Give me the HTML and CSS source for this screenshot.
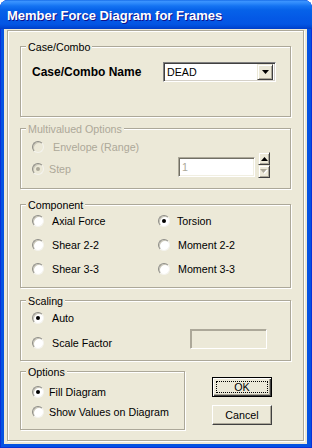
FILE: index.html
```html
<!DOCTYPE html>
<html>
<head>
<meta charset="utf-8">
<link rel="stylesheet" href="styles.css">
</head>
<body>
<div class="window">
  <div class="titlebar"><span class="title">Member Force Diagram for Frames</span></div>
  <div class="client">
    <div class="panel">
      <div class="group g-case">
        <div class="legend">Case/Combo</div>
        <div class="case-row">
          <span class="case-label">Case/Combo Name</span>
          <div class="combo">
            <span class="combo-text">DEAD</span>
            <span class="combo-btn"><svg width="7" height="4" viewBox="0 0 7 4"><path d="M0 0h7L3.5 4z" fill="#000"/></svg></span>
          </div>
        </div>
      </div>

      <div class="group g-multi disabled">
        <div class="legend">Multivalued Options</div>
        <div class="multi-body">
          <div class="radios gap6">
            <div class="opt wide"><span class="radio"></span><span>Envelope (Range)</span></div>
            <div class="opt narrow"><span class="radio checked"></span><span>Step</span></div>
          </div>
          <div class="stepper">
            <div class="textbox step-box">1</div>
            <div class="spin">
              <span class="spin-btn"><svg width="7" height="4" viewBox="0 0 7 4"><path d="M3.5 0L7 4H0z" fill="#000"/></svg></span>
              <span class="spin-btn"><svg width="8" height="5" viewBox="0 0 8 5"><path d="M1 1h7L4.5 5z" fill="#fff"/><path d="M0 0h7L3.5 4z" fill="#aca899"/></svg></span>
            </div>
          </div>
        </div>
      </div>

      <div class="group g-comp">
        <div class="legend">Component</div>
        <div class="comp-grid">
          <div class="opt"><span class="radio"></span><span>Axial Force</span></div>
          <div class="opt tight"><span class="radio checked"></span><span>Torsion</span></div>
          <div class="opt"><span class="radio"></span><span>Shear 2-2</span></div>
          <div class="opt"><span class="radio"></span><span>Moment 2-2</span></div>
          <div class="opt"><span class="radio"></span><span>Shear 3-3</span></div>
          <div class="opt"><span class="radio"></span><span>Moment 3-3</span></div>
        </div>
      </div>

      <div class="group g-scale">
        <div class="legend">Scaling</div>
        <div class="radios gap9 scale-body">
          <div class="opt"><span class="radio checked"></span><span>Auto</span></div>
          <div class="opt"><span class="radio"></span><span>Scale Factor</span><div class="textbox scale-box"></div></div>
        </div>
      </div>

      <div class="bottom">
        <div class="group g-options">
          <div class="legend">Options</div>
          <div class="radios gap4 options-body">
            <div class="opt narrow"><span class="radio checked"></span><span>Fill Diagram</span></div>
            <div class="opt narrow"><span class="radio"></span><span>Show Values on Diagram</span></div>
          </div>
        </div>
        <div class="buttons">
          <div class="btn default"><span class="focus">OK</span></div>
          <div class="btn">Cancel</div>
        </div>
      </div>
    </div>
  </div>
</div>
</body>
</html>
```
FILE: styles.css
```css
html, body {
  margin: 0;
  padding: 0;
  background: #fff;
}
.window {
  width: 312px;
  height: 448px;
  display: flex;
  flex-direction: column;
  background: #0553e2;
  border-radius: 8px 8px 0 0;
  box-shadow: inset 1px 0 0 #0831d9, inset -1px 0 0 #0831d9, inset 0 -1px 0 #0831d9;
  font-family: "Liberation Sans", Arial, sans-serif;
  font-size: 10.7px;
  color: #000;
}
.titlebar {
  height: 29px;
  flex: none;
  display: flex;
  align-items: center;
  padding-left: 7px;
  padding-top: 1px;
  box-sizing: border-box;
  border-radius: 8px 8px 0 0;
  background: linear-gradient(to bottom, #0a5fe0 0px, #3d95ff 1px, #2f8bfb 3px, #1473f2 6px, #0662e9 10px, #0459e6 18px, #0356e4 24px, #0049d6 27px, #003dc7 29px);
}
.title {
  color: #fff;
  font-weight: bold;
  font-size: 13px;
  text-shadow: 1px 1px 0 #0f1089;
}
.client {
  flex: 1;
  margin: 0 5px 4px 4px;
  background: #ece9d8;
  display: flex;
  flex-direction: column;
}
.panel {
  margin: 1px 3px 0 3px;
  height: 411px;
  box-sizing: border-box;
  border: 1px solid #aca899;
  box-shadow: inset 1px 1px 0 #fff, 1px 1px 0 #fff;
  padding: 0 12px;
}
.group {
  box-sizing: border-box;
  border: 1px solid #aca899;
  box-shadow: inset 1px 1px 0 #fff, 1px 1px 0 #fff;
}
.legend {
  width: fit-content;
  margin: -6px 0 0 5px;
  padding: 0 2px;
  height: 13px;
  line-height: 13px;
  background: #ece9d8;
}
.disabled, .disabled .legend { color: #aca899; }

.g-case { margin-top: 15px; height: 71px; }
.g-multi { margin-top: 11px; height: 61px; }
.g-comp { margin-top: 15px; height: 84px; }
.g-scale { margin-top: 12px; height: 61px; }
.bottom { margin-top: 10px; display: flex; align-items: flex-start; }
.g-options { width: 165px; height: 59px; }

.case-row {
  margin-top: 8px;
  padding-left: 11px;
  height: 20px;
  display: flex;
  align-items: center;
}
.case-label {
  width: 131px;
  font-weight: bold;
  font-size: 12px;
}
.combo {
  width: 113px;
  height: 20px;
  box-sizing: border-box;
  background: #fff;
  border: 1px solid;
  border-color: #808080 #fff #fff #808080;
  box-shadow: inset 1px 1px 0 #404040, inset -1px -1px 0 #d4d0c8;
  display: flex;
  align-items: center;
  padding: 2px 2px 2px 3px;
}
.combo-text { flex: 1; }
.combo-btn, .spin-btn {
  box-sizing: border-box;
  background: #ece9d8;
  border: 1px solid;
  border-color: #ece9d8 #404040 #404040 #ece9d8;
  box-shadow: inset 1px 1px 0 #fff, inset -1px -1px 0 #aca899;
  display: flex;
  align-items: center;
  justify-content: center;
}
.combo-btn { width: 16px; height: 16px; }

.radios { display: flex; flex-direction: column; }
.gap4 { gap: 4px; }
.gap6 { gap: 6px; }
.gap9 { gap: 9px; }
.opt {
  display: flex;
  align-items: center;
  height: 16px;
  line-height: 16px;
  gap: 8px;
  white-space: nowrap;
}
.opt.wide { gap: 9px; }
.opt.narrow { gap: 5px; }
.opt.tight { gap: 7px; }
.radio {
  flex: none;
  width: 12px;
  height: 12px;
  box-sizing: border-box;
  border-radius: 50%;
  background: #fff;
  border: 1px solid;
  border-color: #8d8c86 #f4f3ee #f4f3ee #8d8c86;
  box-shadow: inset 1px 1px 0 #c9c6b8;
  display: flex;
  align-items: center;
  justify-content: center;
}
.radio.checked::after {
  content: "";
  width: 4px;
  height: 4px;
  border-radius: 50%;
  background: #000;
}
.disabled .radio { background: #ece9d8; }
.disabled .radio.checked::after { background: #aca899; }

.multi-body {
  margin-top: 3px;
  padding-left: 11px;
  display: flex;
}
.stepper {
  margin-left: auto;
  margin-right: 20px;
  margin-top: 13px;
  display: flex;
  gap: 3px;
}
.textbox {
  box-sizing: border-box;
  height: 20px;
  width: 77px;
  border: 1px solid;
  border-color: #aca899 #fff #fff #aca899;
  box-shadow: inset 1px 1px 0 #716f64, inset -1px -1px 0 #f1efe2;
  line-height: 18px;
  padding-left: 3px;
}
.step-box {
  margin-top: 5px;
  background: #fff;
  color: #aca899;
}
.spin { display: flex; flex-direction: column; }
.spin-btn { width: 12px; height: 13px; }

.comp-grid {
  margin-top: 1px;
  padding-left: 11px;
  display: grid;
  grid-template-columns: 126px auto;
  row-gap: 8px;
}

.scale-body { margin-top: 2px; padding-left: 11px; }
.scale-box {
  margin-left: auto;
  margin-right: 23px;
  align-self: flex-start;
  margin-top: -6px;
  background: #ece9d8;
  box-shadow: inset 1px 1px 0 #aca899;
}

.options-body { margin-top: 5px; padding-left: 11px; }

.buttons {
  margin-left: 27px;
  margin-top: 6px;
  display: flex;
  flex-direction: column;
  gap: 8px;
}
.btn {
  width: 60px;
  height: 20px;
  box-sizing: border-box;
  background: #ece9d8;
  border: 1px solid;
  border-color: #fff #404040 #404040 #fff;
  box-shadow: inset -1px -1px 0 #aca899;
  display: flex;
  align-items: center;
  justify-content: center;
  line-height: 13px;
}
.btn.default {
  border: 1px solid #000;
  box-shadow: inset 1px 1px 0 #fff, inset -1px -1px 0 #404040, inset -2px -2px 0 #aca899;
  padding: 3px;
}
.focus {
  flex: 1;
  align-self: stretch;
  border: 1px dotted #000;
  display: flex;
  align-items: center;
  justify-content: center;
}
```
